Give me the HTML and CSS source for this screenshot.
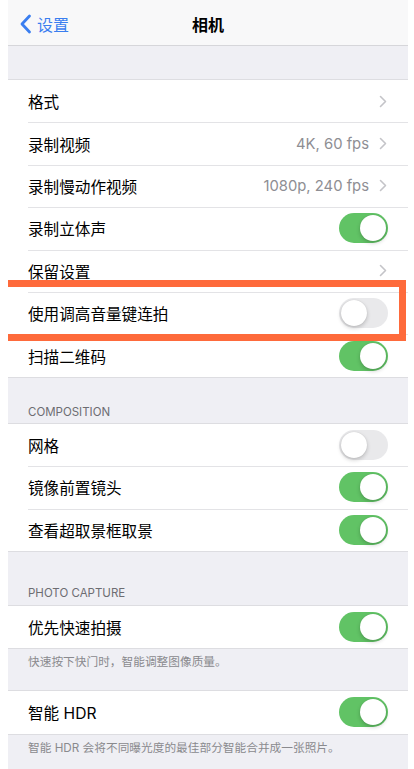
FILE: index.html
```html
<!DOCTYPE html>
<html lang="zh-CN">

<head>
    <meta charset="UTF-8">
    <meta name="viewport" content="width=device-width, initial-scale=1.0">
    <title>相机</title>
    <link rel="stylesheet" href="styles.css">
</head>

<body>
    <div class="screen">
        <!-- Navigation bar -->
        <div class="navbar">
            <div class="back">
                <svg class="back-icon" width="13" height="20" viewBox="0 0 13 20">
                    <path d="M10.5 2 L3 10 L10.5 18" fill="none" stroke="#3a7ef0" stroke-width="2.8"
                        stroke-linecap="round" stroke-linejoin="round" />
                </svg>
                <span>设置</span>
            </div>
            <div class="title">相机</div>
        </div>

        <div class="gap-top"></div>

        <div class="group">
            <div class="row">
                <span class="label">格式</span>
                <span class="chevron"><svg width="8" height="13" viewBox="0 0 8 13"><path d="M1.5 1.5 L6.5 6.5 L1.5 11.5" /></svg></span>
            </div>
            <div class="row">
                <span class="label">录制视频</span>
                <span class="value">4K, 60 fps</span>
                <span class="chevron"><svg width="8" height="13" viewBox="0 0 8 13"><path d="M1.5 1.5 L6.5 6.5 L1.5 11.5" /></svg></span>
            </div>
            <div class="row">
                <span class="label">录制慢动作视频</span>
                <span class="value">1080p, 240 fps</span>
                <span class="chevron"><svg width="8" height="13" viewBox="0 0 8 13"><path d="M1.5 1.5 L6.5 6.5 L1.5 11.5" /></svg></span>
            </div>
            <div class="row">
                <span class="label">录制立体声</span>
                <span class="toggle on"></span>
            </div>
            <div class="row">
                <span class="label">保留设置</span>
                <span class="chevron"><svg width="8" height="13" viewBox="0 0 8 13"><path d="M1.5 1.5 L6.5 6.5 L1.5 11.5" /></svg></span>
            </div>
            <div class="row marked">
                <span class="label">使用调高音量键连拍</span>
                <span class="toggle"></span>
                <div class="highlight"></div>
            </div>
            <div class="row">
                <span class="label">扫描二维码</span>
                <span class="toggle on"></span>
            </div>
        </div>

        <div class="section-header">COMPOSITION</div>
        <div class="group">
            <div class="row">
                <span class="label">网格</span>
                <span class="toggle"></span>
            </div>
            <div class="row">
                <span class="label">镜像前置镜头</span>
                <span class="toggle on"></span>
            </div>
            <div class="row">
                <span class="label">查看超取景框取景</span>
                <span class="toggle on"></span>
            </div>
        </div>

        <div class="section-header tall">PHOTO CAPTURE</div>
        <div class="group">
            <div class="row">
                <span class="label">优先快速拍摄</span>
                <span class="toggle on"></span>
            </div>
        </div>
        <div class="footnote">快速按下快门时，智能调整图像质量。</div>

        <div class="group">
            <div class="row">
                <span class="label">智能 HDR</span>
                <span class="toggle on"></span>
            </div>
        </div>
        <div class="footnote">智能 HDR 会将不同曝光度的最佳部分智能合并成一张照片。</div>
    </div>
</body>

</html>
```

FILE: styles.css
```css
body,
html {
    margin: 0;
    padding: 0;
    background: #fff;
}

body {
    font-family: "Inter", "Noto Sans CJK SC", sans-serif;
    color: #000;
}

.screen {
    width: 400px;
    height: 769px;
    margin-left: 8px;
    background: #efeff4;
    overflow: hidden;
}

/* Navigation bar */
.navbar {
    height: 45px;
    background: #f8f8f9;
    border-bottom: 1px solid #d6d6da;
    display: flex;
    align-items: center;
    justify-content: center;
    position: relative;
}

.back {
    position: absolute;
    left: 11px;
    top: 0;
    height: 100%;
    display: flex;
    align-items: center;
    color: #3a7ef0;
    font-size: 16px;
    padding-top: 2px;
    box-sizing: border-box;
}

.back-icon {
    margin-right: 5px;
}

.title {
    font-size: 16px;
    font-weight: 700;
    padding-top: 2px;
}

.gap-top {
    height: 34px;
}

/* Grouped list */
.group {
    background: #fff;
    border-top: 1px solid #dddde1;
    border-bottom: 1px solid #dddde1;
    margin: -1px 0;
    position: relative;
}

.row {
    height: 42.4px;
    display: flex;
    align-items: center;
    padding: 0 20px 0 20px;
    position: relative;
    box-sizing: border-box;
}

.row+.row::before {
    content: "";
    position: absolute;
    left: 20px;
    right: 0;
    top: 0;
    height: 1px;
    background: #e3e3e6;
}

.label {
    flex: 1;
    font-size: 15.6px;
    letter-spacing: 0;
}

.value {
    font-size: 14.8px;
    color: #8e8e93;
    margin-right: 10px;
}

.chevron {
    display: flex;
    margin-right: 1px;
}

.chevron path {
    fill: none;
    stroke: #c4c4c8;
    stroke-width: 1.6;
    stroke-linecap: round;
    stroke-linejoin: round;
}

/* Switches */
.toggle {
    width: 49px;
    height: 30px;
    border-radius: 15px;
    background: #e9e9eb;
    position: relative;
    flex-shrink: 0;
}

.toggle::after {
    content: "";
    position: absolute;
    top: 2px;
    left: 2px;
    width: 26px;
    height: 26px;
    border-radius: 50%;
    background: #fff;
    box-shadow: 0 2px 4px rgba(0, 0, 0, 0.2), 0 0 1px rgba(0, 0, 0, 0.15);
}

.toggle.on {
    background: #61c365;
}

.toggle.on::after {
    left: 21px;
}

/* Orange outline drawn over the volume-button row */
.highlight {
    position: absolute;
    left: -7px;
    right: 2px;
    top: -12px;
    bottom: -7px;
    border: 7px solid #fe6a3b;
    pointer-events: none;
    z-index: 5;
}

/* Section headers and footers */
.section-header {
    height: 47px;
    box-sizing: border-box;
    display: flex;
    align-items: flex-end;
    padding: 0 20px 5px;
    font-size: 11.5px;
    color: #6d6d72;
    line-height: 14px;
}

.section-header.tall {
    height: 55px;
    padding-bottom: 6px;
}

.footnote {
    height: 43px;
    box-sizing: border-box;
    padding: 7px 20px 0;
    font-size: 11.7px;
    line-height: 14px;
    color: #8a8a8e;
}
```
